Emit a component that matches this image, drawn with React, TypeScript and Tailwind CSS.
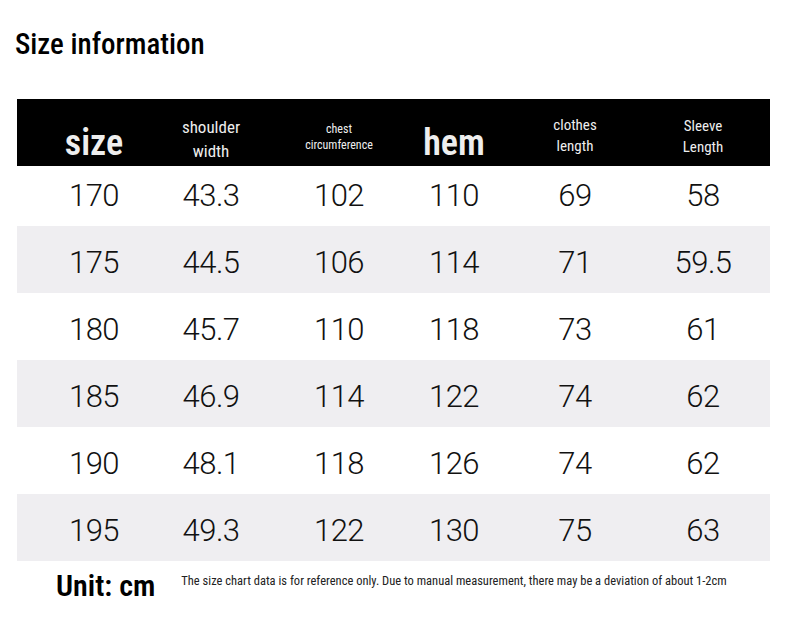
const rows = [
  ["170", "43.3", "102", "110", "69", "58"],
  ["175", "44.5", "106", "114", "71", "59.5"],
  ["180", "45.7", "110", "118", "73", "61"],
  ["185", "46.9", "114", "122", "74", "62"],
  ["190", "48.1", "118", "126", "74", "62"],
  ["195", "49.3", "122", "130", "75", "63"],
]

const cond = "font-['Roboto_Condensed','DejaVu_Sans_Condensed','Liberation_Sans_Narrow',sans-serif]"
const cols = "grid grid-cols-[116px_118px_138px_92px_150px_106px] pl-[19px]"

export default function App() {
  return (
    <main className="w-[790px] h-[634px] bg-white overflow-hidden">
      <h1 className={`${cond} pl-[15px] pt-[26px] text-[29px] leading-[36px] font-medium text-black`}>
        Size information
      </h1>

      <div className="mx-[17px] mt-[37px] w-[753px]">
        <div className={`${cols} ${cond} h-[67px] bg-black text-[#eeeeee] items-center text-center`}>
          <div className="text-[36px] font-semibold leading-none pt-[20px]">size</div>
          <div className="text-[17px] leading-[24px] pt-[12px]">
            shoulder
            <br />
            width
          </div>
          <div className="text-[12px] leading-[16px] pt-[8px]">
            chest
            <br />
            circumference
          </div>
          <div className="text-[36px] font-semibold leading-none pt-[20px]">hem</div>
          <div className="text-[15px] leading-[21px] pt-[6px]">
            clothes
            <br />
            length
          </div>
          <div className="text-[15px] leading-[21px] pt-[8px]">
            Sleeve
            <br />
            Length
          </div>
        </div>

        {rows.map((r, i) => (
          <div
            key={i}
            className={`${cols} items-center text-center font-['Roboto','Noto_Sans',sans-serif] font-light tracking-[-0.5px] text-[31px] text-[#111] ${
              i === 0 ? "h-[60px]" : "h-[67px] pt-[7px]"
            } ${i % 2 === 1 ? "bg-[#efeef1]" : "bg-white"}`}
          >
            {r.map((v, j) => (
              <div key={j}>{v}</div>
            ))}
          </div>
        ))}
      </div>

      <div className={`${cond} flex items-start pl-[56px] pt-[5px]`}>
        <div className="text-[30px] font-semibold leading-[40px] text-black">Unit: cm</div>
        <div className="ml-[26px] pt-[6px] text-[12.5px] leading-[18px] text-[#222]">
          The size chart data is for reference only. Due to manual measurement, there may be a deviation of about 1-2cm
        </div>
      </div>
    </main>
  )
}
